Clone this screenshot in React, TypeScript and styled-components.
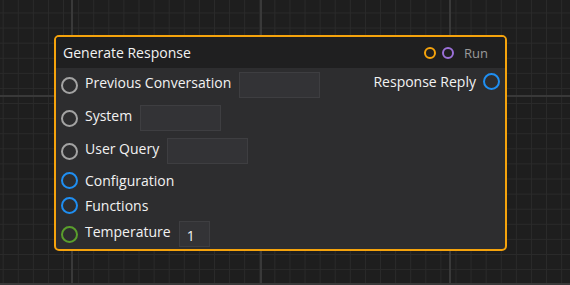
import React from "react";
import styled, { createGlobalStyle } from "styled-components";

const GlobalStyle = createGlobalStyle`
  html, body {
    margin: 0;
    padding: 0;
    background: #1e1e1e;
  }
  body {
    font-family: "Open Sans", "Noto Sans", sans-serif;
  }
  * { box-sizing: border-box; }
`;

const Canvas = styled.div`
  position: relative;
  width: 570px;
  height: 285px;
  overflow: hidden;
  background-color: #1e1e1e;
  background-image:
    linear-gradient(to right, #393939 0, #393939 2px, transparent 2px),
    linear-gradient(to bottom, #393939 0, #393939 2px, transparent 2px),
    linear-gradient(to right, #2a2a2a 0, #2a2a2a 1px, transparent 1px),
    linear-gradient(to bottom, #2a2a2a 0, #2a2a2a 1px, transparent 1px);
  background-size: 189px 189px, 189px 188px, 15.1px 15.1px, 15.1px 15.1px;
  background-position: 71px 0, 0 95px, 2.7px 0, 0 12.5px;
`;

const Node = styled.div`
  position: absolute;
  left: 54px;
  top: 35px;
  width: 453px;
  height: 216px;
  border: 2px solid #f5a30c;
  border-radius: 5px;
  background: #2d2d2f;
  display: flex;
  flex-direction: column;
  overflow: hidden;
  color: #f2f2f2;
  font-size: 14px;
`;

const Header = styled.div`
  height: 31px;
  flex: none;
  display: flex;
  align-items: center;
  justify-content: space-between;
  padding: 0 17px 0 7px;
  background: #1f1f20;
`;

const Title = styled.span`
  font-size: 14px;
  color: #f2f2f2;
`;

const HeaderRight = styled.div`
  display: flex;
  align-items: center;
`;

const Pin = styled.span<{ $color: string }>`
  width: 12px;
  height: 12px;
  border-radius: 50%;
  border: 2px solid ${(p) => p.$color};
  margin-right: 6px;
`;

const RunLabel = styled.span`
  margin-left: 4px;
  font-size: 13px;
  color: #9a9a9a;
`;

const Body = styled.div`
  flex: 1;
  display: flex;
  justify-content: space-between;
  padding: 4px 5px 0 5px;
`;

const Column = styled.div`
  display: flex;
  flex-direction: column;
  gap: 7px;
`;

const Row = styled.div<{ $tall?: boolean }>`
  display: flex;
  align-items: center;
  height: ${(p) => (p.$tall ? 26 : 18)}px;
`;

const Socket = styled.span<{ $color: string }>`
  width: 17px;
  height: 17px;
  flex: none;
  border-radius: 50%;
  border: 2.5px solid ${(p) => p.$color};
`;

const Label = styled.span<{ $raised?: boolean; $right?: boolean }>`
  font-size: 14px;
  color: #f2f2f2;
  white-space: nowrap;
  margin: ${(p) => (p.$right ? "0 7px 0 0" : "0 8px 0 7px")};
  margin-bottom: ${(p) => (p.$raised ? "6px" : "0")};
`;

const Field = styled.div<{ $width: number }>`
  width: ${(p) => p.$width}px;
  height: 26px;
  background: #333336;
  border: 1px solid #3e3e41;
  color: #f2f2f2;
  font-size: 14px;
  display: flex;
  align-items: flex-end;
  padding: 0 0 1px 7px;
`;

const GRAY = "#a3a3a3";
const BLUE = "#1f8ef1";
const GREEN = "#5a9e2c";

type Input = { label: string; color: string; field?: number; value?: string };

const inputs: Input[] = [
  { label: "Previous Conversation", color: GRAY, field: 81 },
  { label: "System", color: GRAY, field: 81 },
  { label: "User Query", color: GRAY, field: 81 },
  { label: "Configuration", color: BLUE },
  { label: "Functions", color: BLUE },
  { label: "Temperature", color: GREEN, field: 31, value: "1" },
];

export default function App() {
  return (
    <>
      <GlobalStyle />
      <Canvas>
        <Node>
          <Header>
            <Title>Generate Response</Title>
            <HeaderRight>
              <Pin $color="#f5a30c" />
              <Pin $color="#9b70d8" />
              <RunLabel>Run</RunLabel>
            </HeaderRight>
          </Header>
          <Body>
            <Column>
              {inputs.map((i) => (
                <Row key={i.label} $tall={!!i.field}>
                  <Socket $color={i.color} />
                  <Label $raised={!!i.field}>{i.label}</Label>
                  {i.field ? <Field $width={i.field}>{i.value ?? ""}</Field> : null}
                </Row>
              ))}
            </Column>
            <Column>
              <Row>
                <Label $right>Response Reply</Label>
                <Socket $color={BLUE} />
              </Row>
            </Column>
          </Body>
        </Node>
      </Canvas>
    </>
  );
}
